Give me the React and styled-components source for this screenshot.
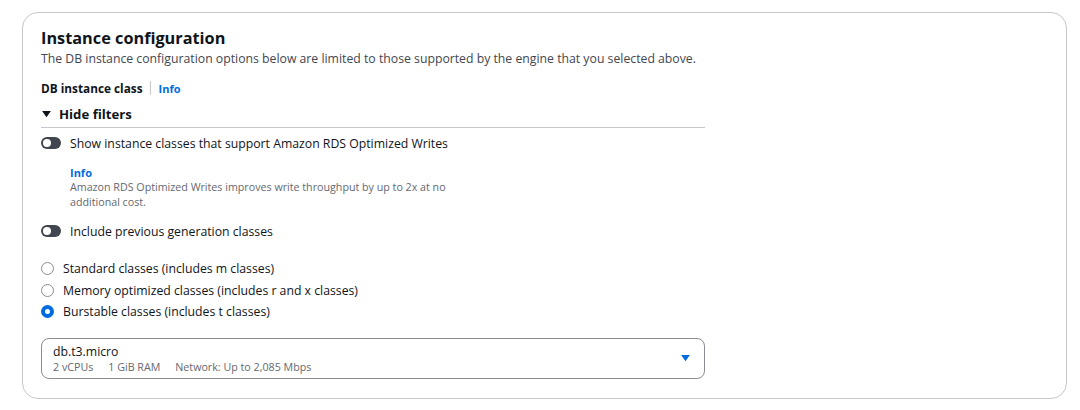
import styled, { createGlobalStyle } from "styled-components";

const GlobalStyle = createGlobalStyle`
  body {
    margin: 0;
    background: #ffffff;
    font-family: "Open Sans", "Liberation Sans", sans-serif;
    color: #0f141a;
  }
`;

const options = [
  { label: "Standard classes (includes m classes)", checked: false },
  { label: "Memory optimized classes (includes r and x classes)", checked: false },
  { label: "Burstable classes (includes t classes)", checked: true },
];

const App = () => {
  return (
    <>
      <GlobalStyle />
      <Card>
        <Title>Instance configuration</Title>
        <Description>
          The DB instance configuration options below are limited to those
          supported by the engine that you selected above.
        </Description>
        <LabelRow>
          <FieldLabel>DB instance class</FieldLabel>
          <Divider />
          <InfoLink>Info</InfoLink>
        </LabelRow>
        <Filters>
          <FilterHeader>
            <Caret viewBox="0 0 10 8">
              <path d="M0 0 H10 L5 7 Z" fill="#0f141a" />
            </Caret>
            Hide filters
          </FilterHeader>
          <ToggleRow>
            <Toggle />
            <ToggleLabel>
              Show instance classes that support Amazon RDS Optimized Writes
            </ToggleLabel>
          </ToggleRow>
          <ToggleHelp>
            <InfoLink>Info</InfoLink>
            <HelpText>
              Amazon RDS Optimized Writes improves write throughput by up to 2x
              at no additional cost.
            </HelpText>
          </ToggleHelp>
          <ToggleRow $spaced>
            <Toggle />
            <ToggleLabel>Include previous generation classes</ToggleLabel>
          </ToggleRow>
        </Filters>
        <RadioGroup>
          {options.map((o) => (
            <RadioRow key={o.label}>
              <Radio $checked={o.checked} />
              <RadioLabel>{o.label}</RadioLabel>
            </RadioRow>
          ))}
        </RadioGroup>
        <Select>
          <SelectText>
            <SelectValue>db.t3.micro</SelectValue>
            <SelectTags>
              <span>2 vCPUs</span>
              <span>1 GiB RAM</span>
              <span>Network: Up to 2,085 Mbps</span>
            </SelectTags>
          </SelectText>
          <Arrow viewBox="0 0 10 8">
            <path d="M0 0 H10 L5 7 Z" fill="#006ce0" />
          </Arrow>
        </Select>
      </Card>
    </>
  );
};

export default App;

const Card = styled.div`
  margin: 12px 0 0 22px;
  width: 1045px;
  height: 387px;
  box-sizing: border-box;
  border: 1px solid #c6c6cd;
  border-radius: 16px;
  padding: 13px 18px 0;
`;

const Title = styled.h2`
  margin: 0;
  font-size: 16.3px;
  line-height: 24px;
  font-weight: 700;
`;

const Description = styled.p`
  margin: 0;
  font-size: 12.25px;
  line-height: 18px;
  color: #424650;
`;

const LabelRow = styled.div`
  display: flex;
  align-items: center;
  margin-top: 11px;
  height: 18px;
`;

const FieldLabel = styled.span`
  font-size: 11.8px;
  font-weight: 700;
`;

const Divider = styled.span`
  width: 1px;
  height: 14px;
  background: #c6c6cd;
  margin: 0 8px 0 7px;
`;

const InfoLink = styled.span`
  font-size: 11px;
  font-weight: 700;
  color: #006ce0;
`;

const Filters = styled.div`
  width: 664px;
  margin-top: 8px;
`;

const FilterHeader = styled.div`
  display: flex;
  align-items: center;
  gap: 8px;
  font-size: 13.2px;
  font-weight: 700;
  height: 18px;
  padding-bottom: 4px;
  border-bottom: 1px solid #c6c6cd;
`;

const Caret = styled.svg`
  width: 9px;
  height: 7px;
  margin-left: 1px;
`;

const ToggleRow = styled.div`
  display: flex;
  align-items: center;
  gap: 9px;
  margin-top: ${(p) => (p.$spaced ? "14px" : "7px")};
  height: 16px;
`;

const Toggle = styled.span`
  position: relative;
  width: 20px;
  height: 12px;
  border-radius: 6px;
  background: #424650;
  &::after {
    content: "";
    position: absolute;
    left: 2px;
    top: 2px;
    width: 8px;
    height: 8px;
    border-radius: 50%;
    background: #ffffff;
  }
`;

const ToggleLabel = styled.span`
  font-size: 12.25px;
`;

const ToggleHelp = styled.div`
  display: flex;
  flex-direction: column;
  margin: 15px 0 0 29px;
  width: 385px;
  line-height: 14px;
`;

const HelpText = styled.span`
  font-size: 10.7px;
  line-height: 14.5px;
  color: #656871;
`;

const RadioGroup = styled.div`
  display: flex;
  flex-direction: column;
  gap: 4.5px;
  margin-top: 21px;
`;

const RadioRow = styled.div`
  display: flex;
  align-items: center;
  gap: 9px;
  height: 17px;
`;

const Radio = styled.span`
  width: 13px;
  height: 13px;
  box-sizing: border-box;
  border-radius: 50%;
  border: ${(p) => (p.$checked ? "4px solid #006ce0" : "1.5px solid #8c8c94")};
  background: #ffffff;
`;

const RadioLabel = styled.span`
  font-size: 12.25px;
`;

const Select = styled.div`
  display: flex;
  align-items: center;
  justify-content: space-between;
  width: 664px;
  height: 41px;
  box-sizing: border-box;
  margin-top: 18px;
  padding: 0 14px 0 11px;
  border: 1px solid #8c8c94;
  border-radius: 8px;
`;

const SelectText = styled.div`
  display: flex;
  flex-direction: column;
`;

const SelectValue = styled.span`
  font-size: 12.25px;
  line-height: 16px;
`;

const SelectTags = styled.div`
  display: flex;
  gap: 15px;
  font-size: 10.7px;
  line-height: 14px;
  color: #656871;
`;

const Arrow = styled.svg`
  width: 9px;
  height: 7px;
`;
